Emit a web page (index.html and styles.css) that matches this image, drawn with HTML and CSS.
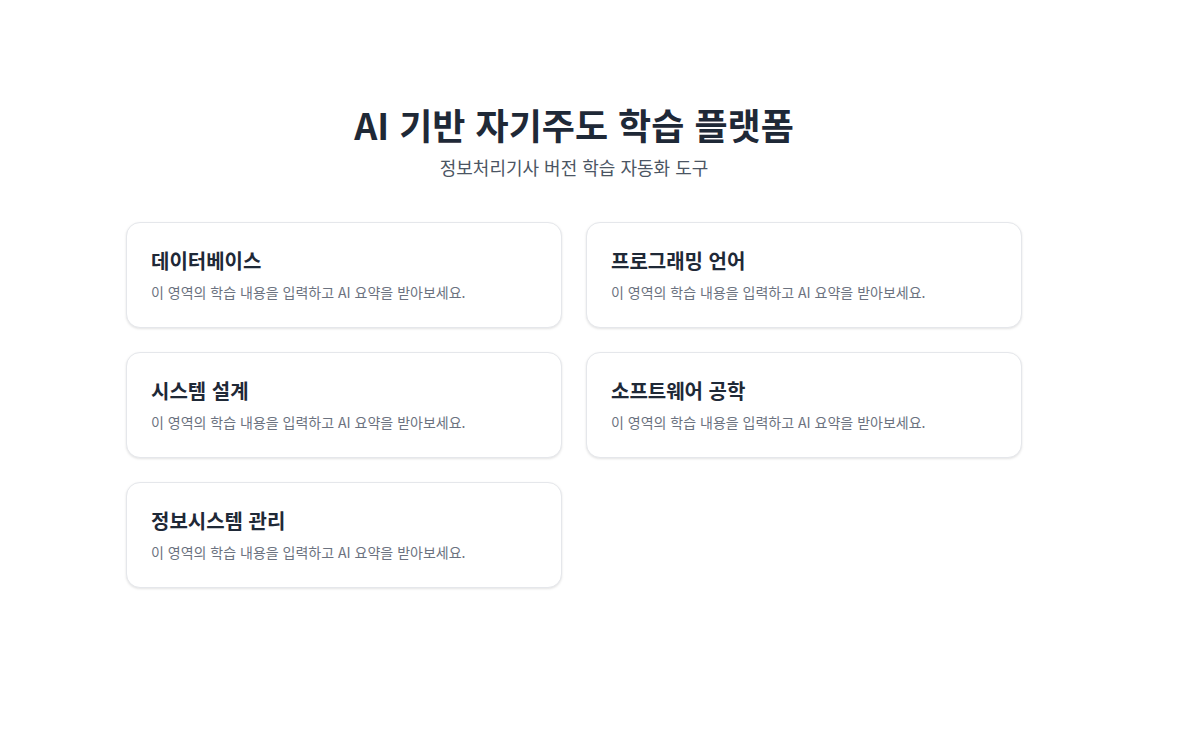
FILE: index.html
```html
<!DOCTYPE html>
<html lang="ko">
<head>
<meta charset="utf-8">
<title>AI 기반 자기주도 학습 플랫폼</title>
<link rel="stylesheet" href="styles.css">
</head>
<body>
<div class="page">
  <main class="container">
    <header class="header">
      <h1 class="title">AI 기반 자기주도 학습 플랫폼</h1>
      <p class="subtitle">정보처리기사 버전 학습 자동화 도구</p>
    </header>
    <section class="grid">
      <article class="card">
        <h2 class="card-title">데이터베이스</h2>
        <p class="card-desc">이 영역의 학습 내용을 입력하고 AI 요약을 받아보세요.</p>
      </article>
      <article class="card">
        <h2 class="card-title">프로그래밍 언어</h2>
        <p class="card-desc">이 영역의 학습 내용을 입력하고 AI 요약을 받아보세요.</p>
      </article>
      <article class="card">
        <h2 class="card-title">시스템 설계</h2>
        <p class="card-desc">이 영역의 학습 내용을 입력하고 AI 요약을 받아보세요.</p>
      </article>
      <article class="card">
        <h2 class="card-title">소프트웨어 공학</h2>
        <p class="card-desc">이 영역의 학습 내용을 입력하고 AI 요약을 받아보세요.</p>
      </article>
      <article class="card">
        <h2 class="card-title">정보시스템 관리</h2>
        <p class="card-desc">이 영역의 학습 내용을 입력하고 AI 요약을 받아보세요.</p>
      </article>
    </section>
  </main>
</div>
</body>
</html>
```
FILE: styles.css
```css
* { box-sizing: border-box; }
html, body { margin: 0; padding: 0; background: #ffffff; }
body {
  font-family: "Noto Sans CJK KR", "Noto Sans", sans-serif;
  color: #1f2937;
}
.page {
  display: flex;
  justify-content: center;
  padding: 102px 35px 40px 0;
}
.container {
  width: 896px;
}
.header {
  text-align: center;
  margin-bottom: 41px;
}
.title {
  margin: 0;
  font-size: 36px;
  line-height: 44px;
  font-weight: 700;
  color: #1f2937;
}
.subtitle {
  margin: 7px 0 0;
  font-size: 18px;
  line-height: 28px;
  color: #4b5563;
}
.grid {
  display: grid;
  grid-template-columns: 1fr 1fr;
  gap: 24px;
}
.card {
  background: #fff;
  border: 1px solid #e5e7eb;
  border-radius: 14px;
  padding: 24px 24px 25px;
  box-shadow: 0 1px 3px rgba(0,0,0,0.08), 0 1px 2px rgba(0,0,0,0.04);
}
.card-title {
  margin: 0;
  font-size: 20px;
  line-height: 28px;
  font-weight: 700;
  color: #1f2937;
}
.card-desc {
  margin: 7px 0 0;
  font-size: 14px;
  line-height: 20px;
  color: #6b7280;
}
```
